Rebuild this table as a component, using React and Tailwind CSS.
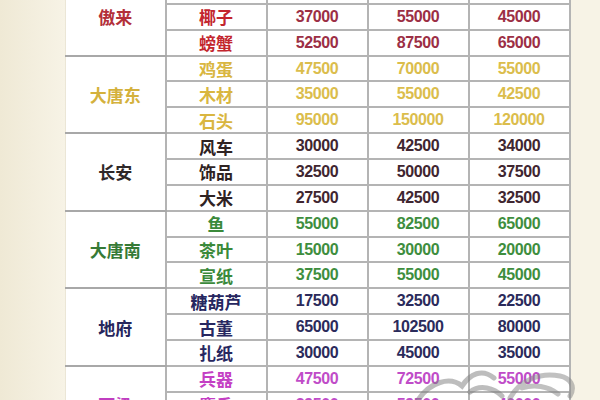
import React from 'react';

const groups = [
  {
    city: '傲来',
    cityColor: 'text-[#b3303a]',
    itemColor: 'text-[#c3262e]',
    numColor: 'text-[#9c2f45]',
    rows: [
      ['珍珠', 42500, 62500, 50000],
      ['椰子', 37000, 55000, 45000],
      ['螃蟹', 52500, 87500, 65000],
    ],
  },
  {
    city: '大唐东',
    cityColor: 'text-[#d4b13c]',
    itemColor: 'text-[#d9b640]',
    numColor: 'text-[#dbbd4c]',
    rows: [
      ['鸡蛋', 47500, 70000, 55000],
      ['木材', 35000, 55000, 42500],
      ['石头', 95000, 150000, 120000],
    ],
  },
  {
    city: '长安',
    cityColor: 'text-[#2f2828]',
    itemColor: 'text-[#2f2323]',
    numColor: 'text-[#3f2630]',
    rows: [
      ['风车', 30000, 42500, 34000],
      ['饰品', 32500, 50000, 37500],
      ['大米', 27500, 42500, 32500],
    ],
  },
  {
    city: '大唐南',
    cityColor: 'text-[#367a36]',
    itemColor: 'text-[#3b8a3b]',
    numColor: 'text-[#3e8e3e]',
    rows: [
      ['鱼', 55000, 82500, 65000],
      ['茶叶', 15000, 30000, 20000],
      ['宣纸', 37500, 55000, 45000],
    ],
  },
  {
    city: '地府',
    cityColor: 'text-[#26265c]',
    itemColor: 'text-[#272760]',
    numColor: 'text-[#2b2b5b]',
    rows: [
      ['糖葫芦', 17500, 32500, 22500],
      ['古董', 65000, 102500, 80000],
      ['扎纸', 30000, 45000, 35000],
    ],
  },
  {
    city: '西梁',
    cityColor: 'text-[#c03ec0]',
    itemColor: 'text-[#c43fc4]',
    numColor: 'text-[#c04cc8]',
    rows: [
      ['兵器', 47500, 72500, 55000],
      ['麝香', 39500, 59500, 40000],
      ['佛珠', 45000, 65000, 52500],
    ],
  },
];

const cjk = { fontFamily: '"Noto Sans CJK SC", "Noto Sans", sans-serif' };
const num = { fontFamily: '"Liberation Sans", Arial, sans-serif' };

export default function App() {
  return (
    <div className="flex h-[400px] w-[600px] overflow-hidden bg-[#f6f2e3]">
      <div className="w-[65px] shrink-0 bg-gradient-to-r from-[#efe9d5] to-[#f7f3e6]" />
      <div className="relative w-[504px] shrink-0">
        <table className="mt-[-23px] w-[504px] table-fixed border-collapse bg-white">
          <colgroup>
            <col className="w-[100px]" />
            <col className="w-[101px]" />
            <col className="w-[101px]" />
            <col className="w-[101px]" />
            <col className="w-[101px]" />
          </colgroup>
          <tbody>
            {groups.map((g) =>
              g.rows.map((r, i) => (
                <tr key={g.city + r[0]} className="h-[25.87px]">
                  {i === 0 && (
                    <td
                      rowSpan={g.rows.length}
                      style={cjk}
                      className={`border-y-2 border-l border-y-[#a8a8a8] border-l-[#ebe6d6] border-r-2 border-r-[#b4b4b4] text-center text-[17px] font-semibold leading-none ${g.cityColor}`}
                    >
                      {g.city}
                    </td>
                  )}
                  <td
                    style={cjk}
                    className={`border-2 border-[#b4b4b4] p-0 text-center text-[17px] font-bold leading-none ${g.itemColor}`}
                  >
                    {r[0]}
                  </td>
                  {r.slice(1).map((n, k) => (
                    <td
                      key={k}
                      style={num}
                      className={`border-2 border-[#b4b4b4] p-0 text-center text-[16px] font-bold leading-none tracking-[-0.4px] ${g.numColor}`}
                    >
                      {n}
                    </td>
                  ))}
                </tr>
              ))
            )}
          </tbody>
        </table>
        {/* watermark */}
        <svg
          className="pointer-events-none absolute left-[345px] top-[362px] opacity-50"
          width="170"
          height="40"
          viewBox="0 0 170 40"
        >
          <path
            d="M8 38 C20 20 40 14 52 24 C60 12 72 6 84 16 M60 30 C70 22 84 26 92 34"
            stroke="#7d7d7d"
            strokeWidth="5"
            fill="none"
            strokeLinecap="round"
          />
          <path
            d="M100 36 C110 18 130 10 150 14 C160 16 166 24 160 34 M112 26 C124 22 138 24 148 32"
            stroke="#858585"
            strokeWidth="5"
            fill="none"
            strokeLinecap="round"
          />
        </svg>
      </div>
      <div className="flex-1 bg-[#f7f3e6]" />
    </div>
  );
}
